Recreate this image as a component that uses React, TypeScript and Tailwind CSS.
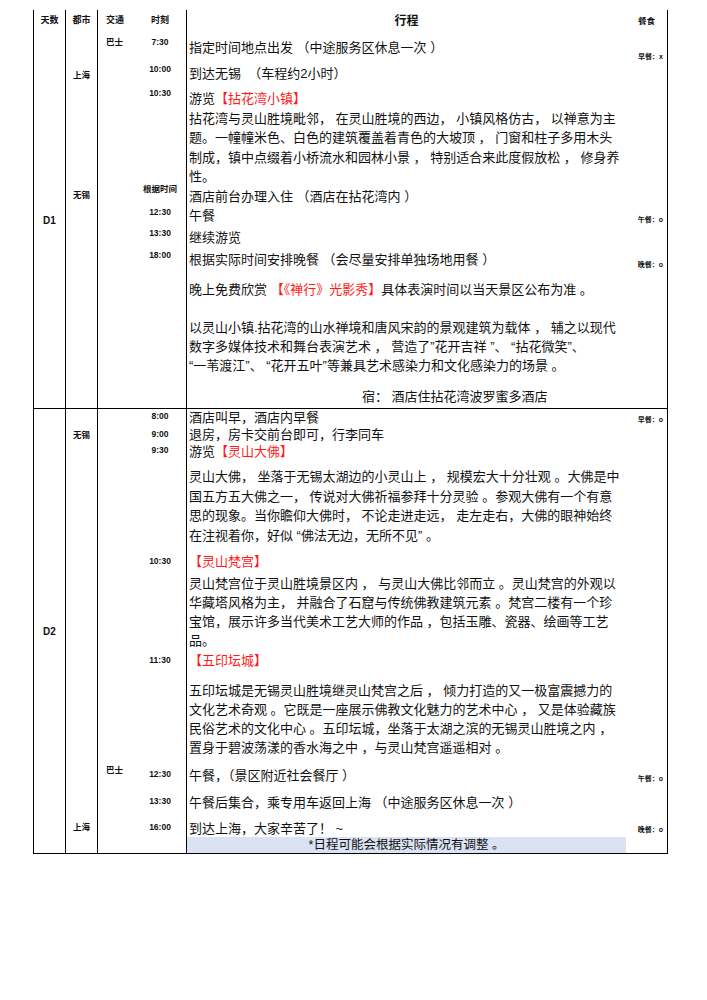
import React from 'react';

const Red = ({ children }: { children: React.ReactNode }) => (
  <span className="text-[#ff1a1a]">{children}</span>
);

// left-hand small labels (times, cities, transport)
const Tag = ({ mt, children }: { mt: string; children: React.ReactNode }) => (
  <div className={`${mt} h-[12px] leading-[12px] text-[8.5px] font-semibold whitespace-nowrap`}>{children}</div>
);

const Meal = ({ mt, children }: { mt: string; children: React.ReactNode }) => (
  <div className={`${mt} h-[10px] leading-[10px] text-[7px] font-semibold text-right pr-[4px] whitespace-nowrap`}>{children}</div>
);

const Line = ({ mt = '', lh = 'leading-[19.5px]', children }: { mt?: string; lh?: string; children: React.ReactNode }) => (
  <div className={`${mt} ${lh} whitespace-pre`}>{children}</div>
);

export default function App() {
  return (
    <div className="bg-white min-h-[1000px] pt-[10px] text-[#111] font-['Liberation_Sans','Noto_Sans_CJK_SC',sans-serif]">
      <div className="ml-[33px] w-[635px] border-x border-black">
        {/* header */}
        <div className="flex h-[22px] items-center">
          <div className="w-[32px] h-full border-r border-black flex items-center justify-center text-[9px] font-bold">天数</div>
          <div className="w-[32px] h-full border-r border-black flex items-center justify-center text-[9px] font-bold">都市</div>
          <div className="w-[89px] h-full border-r border-black flex items-center text-[9px] font-bold">
            <div className="w-[41px] pl-[8px]">交通</div>
            <div className="w-[42px] text-center">时刻</div>
          </div>
          <div className="w-[439px] text-center text-[12px] font-bold">行程</div>
          <div className="w-[41px] text-center text-[8.5px] font-bold">餐食</div>
        </div>

        {/* D1 */}
        <div className="flex h-[377px] border-b border-black">
          <div className="w-[32px] border-r border-black flex items-center justify-center text-[10px] font-bold">D1</div>
          <div className="w-[32px] border-r border-black flex flex-col items-center">
            <Tag mt="mt-[37px]">上海</Tag>
            <Tag mt="mt-[108px]">无锡</Tag>
          </div>
          <div className="w-[89px] border-r border-black flex">
            <div className="w-[41px] pl-[8px]">
              <Tag mt="mt-[4px]">巴士</Tag>
            </div>
            <div className="w-[42px] flex flex-col items-center">
              <Tag mt="mt-[4px]">7:30</Tag>
              <Tag mt="mt-[15px]">10:00</Tag>
              <Tag mt="mt-[12px]">10:30</Tag>
              <Tag mt="mt-[84px]">根据时间</Tag>
              <Tag mt="mt-[11px]">12:30</Tag>
              <Tag mt="mt-[9px]">13:30</Tag>
              <Tag mt="mt-[10px]">18:00</Tag>
            </div>
          </div>
          <div className="w-[439px] pl-[2px] text-[13px]">
            <Line mt="mt-[6px]">指定时间地点出发 （中途服务区休息一次 ）</Line>
            <Line mt="mt-[6.5px]">到达无锡  （车程约2小时）</Line>
            <Line mt="mt-[5.5px]">游览<Red>【拈花湾小镇】</Red></Line>
            <Line>拈花湾与灵山胜境毗邻， 在灵山胜境的西边， 小镇风格仿古， 以禅意为主</Line>
            <Line>题。一幢幢米色、白色的建筑覆盖着青色的大坡顶 ， 门窗和柱子多用木头</Line>
            <Line>制成，镇中点缀着小桥流水和园林小景 ， 特别适合来此度假放松 ， 修身养</Line>
            <Line>性。</Line>
            <Line>酒店前台办理入住 （酒店在拈花湾内 ）</Line>
            <Line>午餐</Line>
            <Line mt="mt-[2.5px]">继续游览</Line>
            <Line mt="mt-[2.5px]">根据实际时间安排晚餐 （会尽量安排单独场地用餐 ）</Line>
            <Line mt="mt-[10.5px]">晚上免费欣赏 <Red>【《禅行》光影秀】</Red>具体表演时间以当天景区公布为准 。</Line>
            <div className="mt-[18.5px] leading-[19px] whitespace-pre">
              <div>以灵山小镇.拈花湾的山水禅境和唐风宋韵的景观建筑为载体 ， 辅之以现代</div>
              <div>数字多媒体技术和舞台表演艺术 ， 营造了”花开吉祥 ”、 “拈花微笑”、</div>
              <div>“一苇渡江”、 “花开五叶”等兼具艺术感染力和文化感染力的场景 。</div>
            </div>
            <Line mt="mt-[12px]"><span className="pl-[173px]">宿： 酒店住拈花湾波罗蜜多酒店</span></Line>
          </div>
          <div className="w-[41px] flex flex-col">
            <Meal mt="mt-[20px]">早餐：x</Meal>
            <Meal mt="mt-[153px]">午餐：o</Meal>
            <Meal mt="mt-[35px]">晚餐：o</Meal>
          </div>
        </div>

        {/* D2 */}
        <div className="flex h-[445px] border-b border-black">
          <div className="w-[32px] border-r border-black flex items-center justify-center text-[10px] font-bold">D2</div>
          <div className="w-[32px] border-r border-black flex flex-col items-center">
            <Tag mt="mt-[20px]">无锡</Tag>
            <Tag mt="mt-[380px]">上海</Tag>
          </div>
          <div className="w-[89px] border-r border-black flex">
            <div className="w-[41px] pl-[8px]">
              <Tag mt="mt-[355px]">巴士</Tag>
            </div>
            <div className="w-[42px] flex flex-col items-center">
              <Tag mt="mt-[1px]">8:00</Tag>
              <Tag mt="mt-[6px]">9:00</Tag>
              <Tag mt="mt-[4px]">9:30</Tag>
              <Tag mt="mt-[99px]">10:30</Tag>
              <Tag mt="mt-[87px]">11:30</Tag>
              <Tag mt="mt-[102px]">12:30</Tag>
              <Tag mt="mt-[15px]">13:30</Tag>
              <Tag mt="mt-[14px]">16:00</Tag>
            </div>
          </div>
          <div className="w-[439px] text-[13px] flex flex-col">
            <div className="pl-[2px] leading-[17px] whitespace-pre">
              <div>酒店叫早，酒店内早餐</div>
              <div>退房，房卡交前台即可，行李同车</div>
              <div>游览<Red>【灵山大佛】</Red></div>
            </div>
            <div className="pl-[2px] mt-[7px] leading-[19.5px] whitespace-pre">
              <div>灵山大佛， 坐落于无锡太湖边的小灵山上 ， 规模宏大十分壮观 。大佛是中</div>
              <div>国五方五大佛之一， 传说对大佛祈福参拜十分灵验 。参观大佛有一个有意</div>
              <div>思的现象。当你瞻仰大佛时， 不论走进走远， 走左走右，大佛的眼神始终</div>
              <div>在注视着你，好似 “佛法无边，无所不见” 。</div>
            </div>
            <div className="pl-[2px]">
              <Line mt="mt-[7px]"><Red>【灵山梵宫】</Red></Line>
            </div>
            <div className="pl-[2px] mt-[2px] leading-[19px] whitespace-pre">
              <div>灵山梵宫位于灵山胜境景区内 ， 与灵山大佛比邻而立 。灵山梵宫的外观以</div>
              <div>华藏塔风格为主， 并融合了石窟与传统佛教建筑元素 。梵宫二楼有一个珍</div>
              <div>宝馆，展示许多当代美术工艺大师的作品 ，包括玉雕、瓷器、绘画等工艺</div>
              <div>品。</div>
            </div>
            <div className="pl-[2px]">
              <Line mt="mt-[1px]"><Red>【五印坛城】</Red></Line>
            </div>
            <div className="pl-[2px] mt-[10.5px] leading-[19px] whitespace-pre">
              <div>五印坛城是无锡灵山胜境继灵山梵宫之后 ， 倾力打造的又一极富震撼力的</div>
              <div>文化艺术奇观 。它既是一座展示佛教文化魅力的艺术中心 ， 又是体验藏族</div>
              <div>民俗艺术的文化中心 。五印坛城，坐落于太湖之滨的无锡灵山胜境之内 ，</div>
              <div>置身于碧波荡漾的香水海之中 ，与灵山梵宫遥遥相对 。</div>
            </div>
            <div className="pl-[2px]">
              <Line mt="mt-[9px]">午餐，（景区附近社会餐厅 ）</Line>
              <Line mt="mt-[7.5px]">午餐后集合，乘专用车返回上海 （中途服务区休息一次 ）</Line>
              <Line mt="mt-[9px]" lh="leading-[16px]">到达上海，大家辛苦了！ ~</Line>
            </div>
            <div className="mt-auto h-[16px] leading-[16px] bg-[#dbe2f1] text-center text-[12.5px] whitespace-pre">*日程可能会根据实际情况有调整 。</div>
          </div>
          <div className="w-[41px] flex flex-col">
            <Meal mt="mt-[6px]">早餐：o</Meal>
            <Meal mt="mt-[349px]">午餐：o</Meal>
            <Meal mt="mt-[41px]">晚餐：o</Meal>
          </div>
        </div>
      </div>
    </div>
  );
}
